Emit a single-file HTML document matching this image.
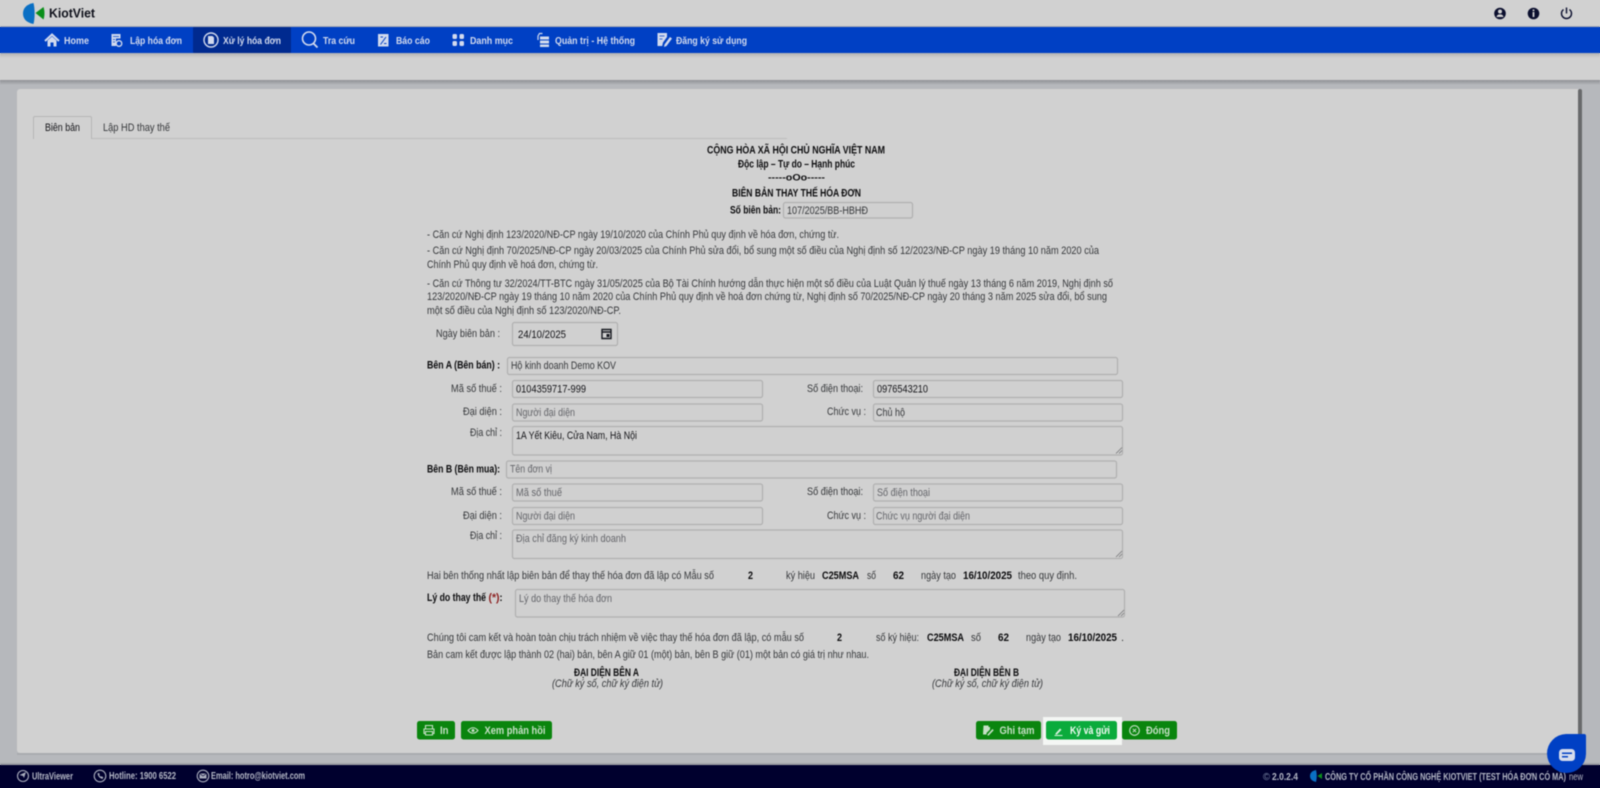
<!DOCTYPE html>
<html lang="vi">
<head>
<meta charset="utf-8">
<title>KiotViet - Biên bản thay thế hóa đơn</title>
<style>
html,body{margin:0;padding:0;width:1600px;height:788px;overflow:hidden;background:#b6b8bc}
.band{position:absolute;left:0;width:1600px}
svg{display:block;position:absolute;left:0;top:0;filter:blur(.45px)}
text{font-family:"Liberation Sans","Noto Sans CJK SC",sans-serif;font-size:11px;fill:#2c2c2e;white-space:pre}
.b{font-weight:700;fill:#0c0c0e}
.g{fill:#36383b}
.p{fill:#64656a}
.v{fill:#141418}
.n{font-weight:700;font-size:10.5px;fill:#d2daee}
.btn{font-weight:700;font-size:11px;fill:#c6e0c6}
.f{font-weight:700;font-size:10px;fill:#b4b8c6}
.box{fill:#d0d0d0;stroke:#b0b0b0;stroke-width:1.2}
.ic{fill:none;stroke:#d2daee;stroke-width:1.4}
.if1{fill:#d2daee}
.ib{fill:none;stroke:#c6e0c6;stroke-width:1.4}
.if{fill:none;stroke:#a9adbd;stroke-width:1.1}
</style>
</head>
<body>
<div class="band" style="top:0;height:80px;background:#d1d1d1"></div>
<div class="band" style="top:27px;height:26px;background:#0040c4"></div>
<div class="band" style="top:765px;height:23px;background:#00002e"></div>
<svg width="1600" height="788" viewBox="0 0 1600 788" xmlns="http://www.w3.org/2000/svg">
<defs>
<linearGradient id="s1" x1="0" y1="0" x2="0" y2="1"><stop offset="0" stop-color="#8f9195"/><stop offset="1" stop-color="#b6b8bc"/></linearGradient>
<linearGradient id="s2" x1="0" y1="0" x2="0" y2="1"><stop offset="0" stop-color="#b2b2b4"/><stop offset="1" stop-color="#d1d1d1"/></linearGradient>
</defs>

<!-- page background + top bars -->
<rect width="1600" height="788" fill="#b6b8bc"/>
<rect width="1600" height="80" fill="#d1d1d1"/>
<rect y="53" width="1600" height="5" fill="url(#s2)"/>
<rect y="80" width="1600" height="5" fill="url(#s1)"/>
<rect y="26" width="1600" height="1" fill="#a9abb3"/>
<rect y="27" width="1600" height="26" fill="#0040c4"/>
<rect x="193" y="27" width="98" height="26" rx="1" fill="#002a8f"/>

<!-- logo -->
<path d="M33.500 3C26 4.500 23 8.500 23 13.500C23 18.500 26 22.500 33.500 24C35 18 35 9 33.500 3Z" fill="#0a6fc4"/>
<path d="M35.500 13L43.500 7C44.800 11 44.800 15.500 43.500 19.500Z" fill="#0a8f1a"/>
<text x="49" y="17.500" textLength="46" lengthAdjust="spacingAndGlyphs" style="font-size:13px;font-weight:700;fill:#10121c">KiotViet</text>

<!-- top right icons -->
<circle cx="1500" cy="13.500" r="5.800" fill="#0b0f2e"/><circle cx="1500" cy="11.500" r="2" fill="#d1d1d1"/><path d="M1496.500 17c.5-2 1.800-2.600 3.500-2.600s3 .6 3.500 2.600z" fill="#d1d1d1"/>
<circle cx="1533.500" cy="13.500" r="5.800" fill="#0b0f2e"/><rect x="1532.600" y="12" width="1.800" height="5" fill="#d1d1d1"/><rect x="1532.600" y="9.500" width="1.800" height="1.600" fill="#d1d1d1"/>
<path d="M1563.500 9.500a5 5 0 1 0 6 0M1566.500 7.500v6" fill="none" stroke="#0b0f2e" stroke-width="1.400"/>

<!-- nav icons -->
<path d="M45 41L52 34.500L59 41" class="ic" style="stroke-width:2"/><path d="M47.500 40.500L52 36.500L56.500 40.500V46.500H53.500V42.500H50.500V46.500H47.500Z" class="if1"/>
<path d="M111.500 34h9v4.500h-4.500v7.500h-4.500z" class="if1"/><path d="M113 36.500h6M113 39.500h2M113 42h2" stroke="#0040c4" stroke-width=".8"/><circle cx="119" cy="43.500" r="2.800" class="ic" style="stroke-width:1.300"/>
<circle cx="211" cy="40" r="7" class="ic"/><path d="M208 36h4.500l1.500 1.500V44h-6z" class="if1"/>
<circle cx="309" cy="38.500" r="6.500" class="ic" style="stroke-width:1.600"/><path d="M313.500 43.500L317.500 47.500" class="ic" style="stroke-width:1.900"/>
<rect x="378" y="34" width="10.500" height="12.500" class="if1"/><path d="M380.500 44.500L386 37M380.500 37h2.500M384 43.500h2.500" stroke="#0040c4" stroke-width="1" fill="none"/>
<rect x="452.500" y="34" width="4.500" height="5" rx="1.500" class="if1"/><rect x="459.500" y="34" width="4.500" height="5" rx="1.500" class="if1"/><rect x="452.500" y="41" width="4.500" height="5" rx="1.500" class="if1"/><rect x="459.500" y="41" width="4.500" height="5" rx="1.500" class="if1"/>
<rect x="540" y="36.500" width="9" height="3" class="if1"/><rect x="540" y="40.500" width="9" height="3" class="if1"/><rect x="540" y="44.500" width="9" height="2.500" class="if1"/><path d="M538 40v-4l1.500-2.500h3" class="ic" style="stroke-width:1.200"/>
<path d="M657.500 33h9.500v4l-4 5.500-.8 3.500h-4.700z" class="if1"/><path d="M670 37L664.500 44.500L664 47L666.500 46L672 38.500Z" class="if1"/><path d="M659.500 36h5M659.500 39h3" stroke="#0040c4" stroke-width=".8"/>

<!-- nav text -->
<text class="n" x="64" y="44" textLength="25" lengthAdjust="spacingAndGlyphs">Home</text>
<text class="n" x="130" y="44" textLength="52" lengthAdjust="spacingAndGlyphs">Lập hóa đơn</text>
<text class="n" x="223" y="44" textLength="58" lengthAdjust="spacingAndGlyphs">Xử lý hóa đơn</text>
<text class="n" x="323" y="44" textLength="32" lengthAdjust="spacingAndGlyphs">Tra cứu</text>
<text class="n" x="396" y="44" textLength="34" lengthAdjust="spacingAndGlyphs">Báo cáo</text>
<text class="n" x="470" y="44" textLength="43" lengthAdjust="spacingAndGlyphs">Danh mục</text>
<text class="n" x="555" y="44" textLength="80" lengthAdjust="spacingAndGlyphs">Quản trị - Hệ thống</text>
<text class="n" x="676" y="44" textLength="71" lengthAdjust="spacingAndGlyphs">Đăng ký sử dụng</text>

<!-- card -->
<rect x="17" y="89" width="1565" height="664" rx="3" fill="#d1d1d1"/>
<rect x="1578" y="89" width="4" height="664" rx="2" fill="#68696b"/>
<rect x="17" y="753" width="1565" height="2" fill="#a9abaf"/>

<!-- tabs -->
<path d="M33 138.500H787" stroke="#bdbdbd" stroke-width="1" fill="none"/>
<path d="M33.500 139V118Q33.500 116.500 35 116.500H90Q91.500 116.500 91.500 118V139" fill="#d1d1d1" stroke="#b6b6b6"/>
<text class="v" x="45" y="131" textLength="35" lengthAdjust="spacingAndGlyphs">Biên bản</text>
<text class="g" x="103" y="131" textLength="67" lengthAdjust="spacingAndGlyphs">Lập HD thay thế</text>

<!-- heading -->
<text class="b" x="707" y="153.500" textLength="178" lengthAdjust="spacingAndGlyphs">CỘNG HÒA XÃ HỘI CHỦ NGHĨA VIỆT NAM</text>
<text class="b" x="738" y="167.500" textLength="117" lengthAdjust="spacingAndGlyphs">Độc lập – Tự do – Hạnh phúc</text>
<text class="b" x="768" y="180.500" textLength="57" lengthAdjust="spacingAndGlyphs" style="font-size:9.500px">-----oOo-----</text>
<text class="b" x="732" y="196.500" textLength="129" lengthAdjust="spacingAndGlyphs">BIÊN BẢN THAY THẾ HÓA ĐƠN</text>
<text class="b" x="730" y="213.500" textLength="51" lengthAdjust="spacingAndGlyphs">Số biên bản:</text>
<rect class="box" x="783.500" y="202.500" width="129" height="15.500" rx="2"/>
<text class="g" x="787" y="214" textLength="81" lengthAdjust="spacingAndGlyphs">107/2025/BB-HBHĐ</text>

<!-- legal basis -->
<text class="g" x="427" y="238" textLength="412" lengthAdjust="spacingAndGlyphs">- Căn cứ Nghị định 123/2020/NĐ-CP ngày 19/10/2020 của Chính Phủ quy định về hóa đơn, chứng từ.</text>
<text class="g" x="427" y="254" textLength="672" lengthAdjust="spacingAndGlyphs">- Căn cứ Nghị định 70/2025/NĐ-CP ngày 20/03/2025 của Chính Phủ sửa đổi, bổ sung một số điều của Nghị định số 12/2023/NĐ-CP ngày 19 tháng 10 năm 2020 của</text>
<text class="g" x="427" y="268" textLength="171" lengthAdjust="spacingAndGlyphs">Chính Phủ quy định về hoá đơn, chứng từ.</text>
<text class="g" x="427" y="287" textLength="686" lengthAdjust="spacingAndGlyphs">- Căn cứ Thông tư 32/2024/TT-BTC ngày 31/05/2025 của Bộ Tài Chính hướng dẫn thực hiện một số điều của Luật Quản lý thuế ngày 13 tháng 6 năm 2019, Nghị định số</text>
<text class="g" x="427" y="300" textLength="680" lengthAdjust="spacingAndGlyphs">123/2020/NĐ-CP ngày 19 tháng 10 năm 2020 của Chính Phủ quy định về hoá đơn chứng từ, Nghị định số 70/2025/NĐ-CP ngày 20 tháng 3 năm 2025 sửa đổi, bổ sung</text>
<text class="g" x="427" y="314" textLength="194" lengthAdjust="spacingAndGlyphs">một số điều của Nghị định số 123/2020/NĐ-CP.</text>

<!-- date -->
<text class="g" x="436" y="337" textLength="64" lengthAdjust="spacingAndGlyphs">Ngày biên bản :</text>
<rect class="box" x="512.500" y="322.500" width="105" height="23" rx="2"/>
<text class="v" x="518" y="338" textLength="48" lengthAdjust="spacingAndGlyphs">24/10/2025</text>
<path d="M602 329.500h9v9h-9zM602 332h9" fill="none" stroke="#16181f" stroke-width="1.400"/><rect x="606.500" y="334" width="3" height="3" fill="#16181f"/>

<!-- Ben A -->
<text class="b" x="427" y="368.500" textLength="73" lengthAdjust="spacingAndGlyphs">Bên A (Bên bán) :</text>
<rect class="box" x="507.500" y="357.500" width="610" height="17" rx="2"/>
<text class="g" x="511" y="369" textLength="105" lengthAdjust="spacingAndGlyphs">Hộ kinh doanh Demo KOV</text>

<text class="g" x="451" y="392" textLength="51" lengthAdjust="spacingAndGlyphs">Mã số thuế :</text>
<rect class="box" x="512.500" y="380.500" width="250" height="17" rx="2"/>
<text class="v" x="516" y="392.500" textLength="70" lengthAdjust="spacingAndGlyphs">0104359717-999</text>
<text class="g" x="807" y="392" textLength="56" lengthAdjust="spacingAndGlyphs">Số điện thoại:</text>
<rect class="box" x="873.500" y="380.500" width="249" height="17" rx="2"/>
<text class="v" x="877" y="392.500" textLength="51" lengthAdjust="spacingAndGlyphs">0976543210</text>

<text class="g" x="463" y="415" textLength="39" lengthAdjust="spacingAndGlyphs">Đại diện :</text>
<rect class="box" x="512.500" y="404" width="250" height="17" rx="2"/>
<text class="p" x="516" y="416" textLength="59" lengthAdjust="spacingAndGlyphs">Người đại diện</text>
<text class="g" x="827" y="415" textLength="39" lengthAdjust="spacingAndGlyphs">Chức vụ :</text>
<rect class="box" x="873.500" y="404" width="249" height="17" rx="2"/>
<text class="g" x="876" y="416" textLength="29" lengthAdjust="spacingAndGlyphs">Chủ hộ</text>

<text class="g" x="470" y="436" textLength="32" lengthAdjust="spacingAndGlyphs">Địa chỉ :</text>
<rect class="box" x="512.500" y="426.500" width="610" height="28.500" rx="2"/>
<text class="v" x="516" y="439" textLength="121" lengthAdjust="spacingAndGlyphs">1A Yết Kiêu, Cửa Nam, Hà Nội</text>
<path d="M1116 453.500L1122 447.500M1119 453.500L1122 450.500" stroke="#77787a" stroke-width=".8"/>

<!-- Ben B -->
<text class="b" x="427" y="472.500" textLength="73" lengthAdjust="spacingAndGlyphs">Bên B (Bên mua):</text>
<rect class="box" x="506.500" y="461" width="610" height="17" rx="2"/>
<text class="p" x="510" y="472.500" textLength="42" lengthAdjust="spacingAndGlyphs">Tên đơn vị</text>

<text class="g" x="451" y="495" textLength="51" lengthAdjust="spacingAndGlyphs">Mã số thuế :</text>
<rect class="box" x="512.500" y="484" width="250" height="17" rx="2"/>
<text class="p" x="516" y="496" textLength="46" lengthAdjust="spacingAndGlyphs">Mã số thuế</text>
<text class="g" x="807" y="495" textLength="56" lengthAdjust="spacingAndGlyphs">Số điện thoại:</text>
<rect class="box" x="873.500" y="484" width="249" height="17" rx="2"/>
<text class="p" x="877" y="496" textLength="53" lengthAdjust="spacingAndGlyphs">Số điện thoại</text>

<text class="g" x="463" y="519" textLength="39" lengthAdjust="spacingAndGlyphs">Đại diện :</text>
<rect class="box" x="512.500" y="507.500" width="250" height="17" rx="2"/>
<text class="p" x="516" y="519.500" textLength="59" lengthAdjust="spacingAndGlyphs">Người đại diện</text>
<text class="g" x="827" y="519" textLength="39" lengthAdjust="spacingAndGlyphs">Chức vụ :</text>
<rect class="box" x="873.500" y="507.500" width="249" height="17" rx="2"/>
<text class="p" x="876" y="519.500" textLength="94" lengthAdjust="spacingAndGlyphs">Chức vụ người đại diện</text>

<text class="g" x="470" y="539" textLength="32" lengthAdjust="spacingAndGlyphs">Địa chỉ :</text>
<rect class="box" x="512.500" y="530" width="610" height="28.500" rx="2"/>
<text class="p" x="516" y="542" textLength="110" lengthAdjust="spacingAndGlyphs">Địa chỉ đăng ký kinh doanh</text>
<path d="M1116 557L1122 551M1119 557L1122 554" stroke="#77787a" stroke-width=".8"/>

<!-- agreement -->
<text class="g" x="427" y="579" textLength="287" lengthAdjust="spacingAndGlyphs">Hai bên thống nhất lập biên bản để thay thế hóa đơn đã lập có Mẫu số</text>
<text class="b" x="748" y="579" textLength="5" lengthAdjust="spacingAndGlyphs">2</text>
<text class="g" x="786" y="579" textLength="29" lengthAdjust="spacingAndGlyphs">ký hiệu</text>
<text class="b" x="822" y="579" textLength="37" lengthAdjust="spacingAndGlyphs">C25MSA</text>
<text class="g" x="867" y="579" textLength="9" lengthAdjust="spacingAndGlyphs">số</text>
<text class="b" x="893" y="579" textLength="11" lengthAdjust="spacingAndGlyphs">62</text>
<text class="g" x="921" y="579" textLength="35" lengthAdjust="spacingAndGlyphs">ngày tạo</text>
<text class="b" x="963" y="579" textLength="49" lengthAdjust="spacingAndGlyphs">16/10/2025</text>
<text class="g" x="1018" y="579" textLength="59" lengthAdjust="spacingAndGlyphs">theo quy định.</text>

<text class="b" x="427" y="601" textLength="59" lengthAdjust="spacingAndGlyphs">Lý do thay thế</text>
<text class="b" x="488.500" y="601" textLength="11" lengthAdjust="spacingAndGlyphs" style="fill:#8c1f1f">(*)</text>
<text class="b" x="499.500" y="601" textLength="3" lengthAdjust="spacingAndGlyphs">:</text>
<rect class="box" x="515.500" y="589.500" width="609" height="27.500" rx="2"/>
<text class="p" x="519" y="602" textLength="93" lengthAdjust="spacingAndGlyphs">Lý do thay thế hóa đơn</text>
<path d="M1118 616L1124 610M1121 616L1124 613" stroke="#77787a" stroke-width=".8"/>

<text class="g" x="427" y="641" textLength="377" lengthAdjust="spacingAndGlyphs">Chúng tôi cam kết và hoàn toàn chịu trách nhiệm về việc thay thế hóa đơn đã lập, có mẫu số</text>
<text class="b" x="837" y="641" textLength="5" lengthAdjust="spacingAndGlyphs">2</text>
<text class="g" x="876" y="641" textLength="43" lengthAdjust="spacingAndGlyphs">số ký hiệu:</text>
<text class="b" x="927" y="641" textLength="37" lengthAdjust="spacingAndGlyphs">C25MSA</text>
<text class="g" x="971" y="641" textLength="10" lengthAdjust="spacingAndGlyphs">số</text>
<text class="b" x="998" y="641" textLength="11" lengthAdjust="spacingAndGlyphs">62</text>
<text class="g" x="1026" y="641" textLength="35" lengthAdjust="spacingAndGlyphs">ngày tạo</text>
<text class="b" x="1068" y="641" textLength="49" lengthAdjust="spacingAndGlyphs">16/10/2025</text>
<text class="g" x="1121" y="641">.</text>
<text class="g" x="427" y="658" textLength="442" lengthAdjust="spacingAndGlyphs">Bản cam kết được lập thành 02 (hai) bản, bên A giữ 01 (một) bản, bên B giữ (01) một bản có giá trị như nhau.</text>

<!-- signatures -->
<text class="b" x="574" y="676" textLength="65" lengthAdjust="spacingAndGlyphs">ĐẠI DIỆN BÊN A</text>
<text class="g" x="552" y="687" textLength="111" lengthAdjust="spacingAndGlyphs" style="font-style:italic">(Chữ ký số, chữ ký điện tử)</text>
<text class="b" x="954" y="676" textLength="65" lengthAdjust="spacingAndGlyphs">ĐẠI DIỆN BÊN B</text>
<text class="g" x="932" y="687" textLength="111" lengthAdjust="spacingAndGlyphs" style="font-style:italic">(Chữ ký số, chữ ký điện tử)</text>

<!-- buttons -->
<rect x="417" y="721" width="38" height="18.500" rx="2.500" fill="#0a850e"/>
<path d="M425.500 729v-3.500h7v3.500M425.500 733.500h-1.500v-4.500h10v4.500h-1.500M425.500 731.500h7v3.500h-7z" class="ib" style="stroke-width:1.100"/>
<text class="btn" x="440" y="734" textLength="8.500" lengthAdjust="spacingAndGlyphs">In</text>

<rect x="461" y="721" width="91" height="18.500" rx="2.500" fill="#0a850e"/>
<path d="M468 730.500Q473 725 478 730.500Q473 736 468 730.500Z" class="ib" style="stroke-width:1.100"/><circle cx="473" cy="730.500" r="1.500" fill="#c6e0c6"/>
<text class="btn" x="484.500" y="734" textLength="61" lengthAdjust="spacingAndGlyphs">Xem phản hồi</text>

<rect x="976" y="721" width="65" height="18.500" rx="2.500" fill="#0a850e"/>
<path d="M983.500 725.500h5v1.500h1.500v2.500l-3.500 3.500v1.500h-3.500z" fill="#c6e0c6"/><path d="M987.500 734.500l5-5.500 1.200 1.300-5 5.200h-1.200z" fill="#c6e0c6"/>
<text class="btn" x="999.500" y="734" textLength="35" lengthAdjust="spacingAndGlyphs">Ghi tạm</text>

<rect x="1043" y="717" width="79" height="28" fill="#f4f6f4"/>
<rect x="1046" y="721" width="71" height="18.500" rx="2.500" fill="#0bab3c"/>
<path d="M1054.500 735.500h8" stroke="#d8f2de" stroke-width="1"/><path d="M1055.500 733.500l4.500-5 1.500 1.300-4.500 4.700h-1.500z" fill="#d8f2de"/>
<text class="btn" x="1070" y="734" textLength="40" lengthAdjust="spacingAndGlyphs" style="fill:#f2fbf4">Ký và gửi</text>

<rect x="1122" y="721" width="55" height="18.500" rx="2.500" fill="#0a850e"/>
<circle cx="1134.500" cy="730.500" r="4.800" class="ib" style="stroke-width:1.100"/><path d="M1132.800 728.800l3.400 3.400M1136.200 728.800l-3.400 3.400" class="ib" style="stroke-width:1"/>
<text class="btn" x="1146" y="734" textLength="24" lengthAdjust="spacingAndGlyphs">Đóng</text>

<!-- footer -->
<rect y="763" width="1600" height="2" fill="#a0a2a8"/>
<rect y="765" width="1600" height="23" fill="#00002e"/>
<circle cx="23" cy="776" r="5.500" class="if"/><path d="M19.500 775l6.500-3-2 6-1-2z" fill="#a9adbd"/>
<text class="f" x="32" y="779.500" textLength="41" lengthAdjust="spacingAndGlyphs">UltraViewer</text>
<circle cx="100" cy="776" r="5.800" class="if"/><path d="M97.500 773.500c.5 3 2 4.500 5 5.500l.8-1.800-1.800-1-.8.6-1.500-1.600.6-.8-1-1.500z" fill="#a9adbd"/>
<text class="f" x="109" y="779" textLength="67" lengthAdjust="spacingAndGlyphs">Hotline: 1900 6522</text>
<circle cx="203" cy="776" r="5.800" class="if"/><rect x="199.500" y="773.500" width="7" height="5" fill="#a9adbd"/><path d="M199.500 773.500l3.500 2.500 3.500-2.500" stroke="#00002e" stroke-width=".7" fill="none"/>
<text class="f" x="211" y="779" textLength="94" lengthAdjust="spacingAndGlyphs">Email: hotro@kiotviet.com</text>

<text x="1263" y="780" textLength="7" lengthAdjust="spacingAndGlyphs" style="font-size:10px;fill:#7d8aa8">©</text>
<text class="f" x="1272" y="780" textLength="26" lengthAdjust="spacingAndGlyphs">2.0.2.4</text>
<path d="M1316 770C1311.500 771 1310 773.500 1310 776S1311.500 781 1316 782C1317 778 1317 774 1316 770Z" fill="#0a6fc4"/>
<path d="M1317.500 776L1322 773V779Z" fill="#0a8f1a"/>
<text class="f" x="1325" y="780" textLength="241" lengthAdjust="spacingAndGlyphs">CÔNG TY CỔ PHẦN CÔNG NGHỆ KIOTVIET (TEST HÓA ĐƠN CÓ MÃ)</text>
<text class="f" x="1569" y="780" textLength="14" lengthAdjust="spacingAndGlyphs" style="font-weight:400">new</text>

<!-- chat bubble -->
<path d="M1584 734H1566A19.500 19.500 0 1 0 1586 754V736Q1586 734 1584 734Z" fill="#0040c4"/>
<rect x="1559" y="749" width="16" height="12" rx="3.500" fill="#d6dcec"/>
<rect x="1562" y="752.500" width="10" height="1.500" fill="#0040c4"/>
<rect x="1562" y="756" width="6" height="1.500" fill="#0040c4"/>
</svg>
</body>
</html>
